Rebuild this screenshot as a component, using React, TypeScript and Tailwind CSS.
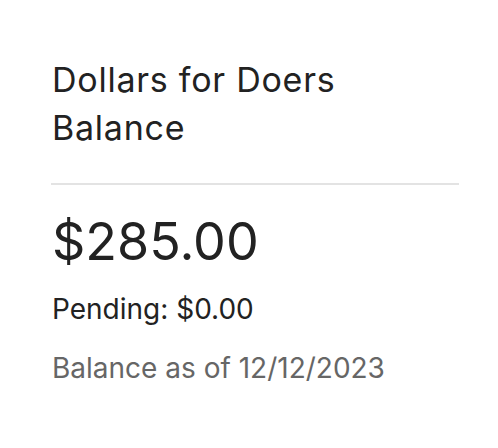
import React, { FC } from 'react'

const App: FC = (): JSX.Element => {
  return (
    <div className="min-h-screen bg-white pt-[56px] pl-[52px] pr-[39px] font-['Inter',sans-serif] text-[#222222]">
      {/* Card Header */}
      <h2 className="max-w-[350px] text-[34px] leading-[48px] font-normal tracking-[0.75px]">Dollars for Doers Balance</h2>

      <hr className="mt-[31px] -ml-px border-t-2 border-[#e3e3e3]" />

      {/* Balance */}
      <div className="mt-[27px] text-[52px] leading-[60px]">$285.00</div>
      <div className="mt-[19px] text-[28px] leading-[36px]">Pending: $0.00</div>
      <div className="mt-[23px] text-[28px] leading-[36px] text-[#666666]">Balance as of 12/12/2023</div>
    </div>
  )
}

export default App
